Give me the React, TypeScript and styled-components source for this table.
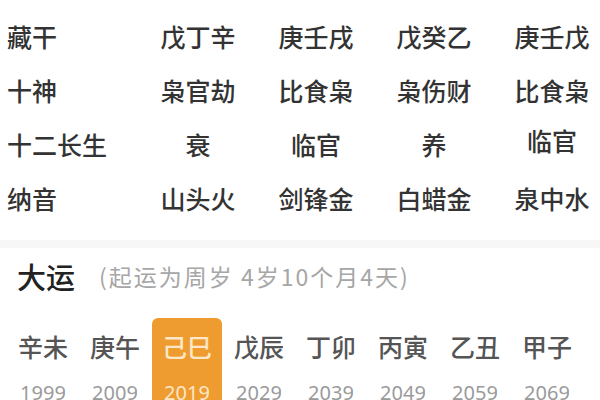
import React from "react";
import styled, { createGlobalStyle } from "styled-components";

const GlobalStyle = createGlobalStyle`
  html, body {
    margin: 0;
    padding: 0;
    background: #ffffff;
    overflow: hidden;
  }
  body {
    font-family: "Noto Sans CJK SC", "Noto Sans", sans-serif;
  }
`;

const Page = styled.div`
  width: 600px;
  height: 400px;
  overflow: hidden;
  background: #ffffff;
`;

const Table = styled.div`
  display: grid;
  grid-template-columns: 139px repeat(4, 118px);
  grid-auto-rows: 54px;
  padding-top: 9px;
`;

const Label = styled.div`
  display: flex;
  align-items: center;
  padding-left: 7px;
  font-size: 25px;
  font-weight: 500;
  color: #333333;
  white-space: nowrap;
`;

const Cell = styled.div<{ $shift?: number }>`
  display: flex;
  align-items: center;
  justify-content: center;
  font-size: 25px;
  font-weight: 500;
  color: #333333;
  white-space: nowrap;
  transform: translateY(${(p) => p.$shift ?? 0}px);
`;

const Divider = styled.div`
  margin-top: 15px;
  height: 8px;
  background: #f7f7f7;
`;

const Header = styled.div`
  display: flex;
  align-items: center;
  height: 40px;
  margin-top: 8px;
  padding-left: 17px;
`;

const Title = styled.span`
  font-size: 29px;
  font-weight: 500;
  color: #222222;
`;

const Sub = styled.span`
  margin-left: 24px;
  font-size: 23px;
  letter-spacing: 2px;
  color: #a6a6a6;
  white-space: nowrap;
`;

const Pillars = styled.div`
  display: flex;
  margin-top: 22px;
  padding-left: 7px;
`;

const Pillar = styled.div<{ $active?: boolean }>`
  flex: none;
  display: flex;
  flex-direction: column;
  align-items: center;
  padding-top: 14px;
  height: 100px;
  box-sizing: border-box;
  border-radius: 6px;
  background: ${(p) => (p.$active ? "#ee9b30" : "transparent")};
  margin: ${(p) => (p.$active ? "0 1px" : "0")};
  width: ${(p) => (p.$active ? "70px" : "72px")};
`;

const GanZhi = styled.div<{ $active?: boolean }>`
  font-size: 25px;
  line-height: 28px;
  font-weight: 500;
  color: ${(p) => (p.$active ? "#fde7c6" : "#555555")};
  white-space: nowrap;
`;

const Year = styled.div<{ $active?: boolean }>`
  margin-top: 20px;
  font-size: 20px;
  line-height: 26px;
  color: ${(p) => (p.$active ? "#fde7c6" : "#9a9a9a")};
  font-family: "Noto Sans", "Noto Sans CJK SC", sans-serif;
`;

const rows: { label: string; cells: string[]; shift?: number[] }[] = [
  { label: "藏干", cells: ["戊丁辛", "庚壬戌", "戊癸乙", "庚壬戊"] },
  { label: "十神", cells: ["枭官劫", "比食枭", "枭伤财", "比食枭"] },
  { label: "十二长生", cells: ["衰", "临官", "养", "临官"], shift: [0, 0, 0, -4] },
  { label: "纳音", cells: ["山头火", "剑锋金", "白蜡金", "泉中水"] },
];

const yun = [
  ["辛未", "1999"],
  ["庚午", "2009"],
  ["己巳", "2019"],
  ["戊辰", "2029"],
  ["丁卯", "2039"],
  ["丙寅", "2049"],
  ["乙丑", "2059"],
  ["甲子", "2069"],
];

export default function App() {
  return (
    <Page>
      <GlobalStyle />
      <Table>
        {rows.map((r) => (
          <React.Fragment key={r.label}>
            <Label>{r.label}</Label>
            {r.cells.map((c, i) => (
              <Cell key={i} $shift={r.shift ? r.shift[i] : 0}>
                {c}
              </Cell>
            ))}
          </React.Fragment>
        ))}
      </Table>
      <Divider />
      <Header>
        <Title>大运</Title>
        <Sub>(起运为周岁 4岁10个月4天)</Sub>
      </Header>
      <Pillars>
        {yun.map(([gz, y], i) => (
          <Pillar key={y} $active={i === 2}>
            <GanZhi $active={i === 2}>{gz}</GanZhi>
            <Year $active={i === 2}>{y}</Year>
          </Pillar>
        ))}
      </Pillars>
    </Page>
  );
}
